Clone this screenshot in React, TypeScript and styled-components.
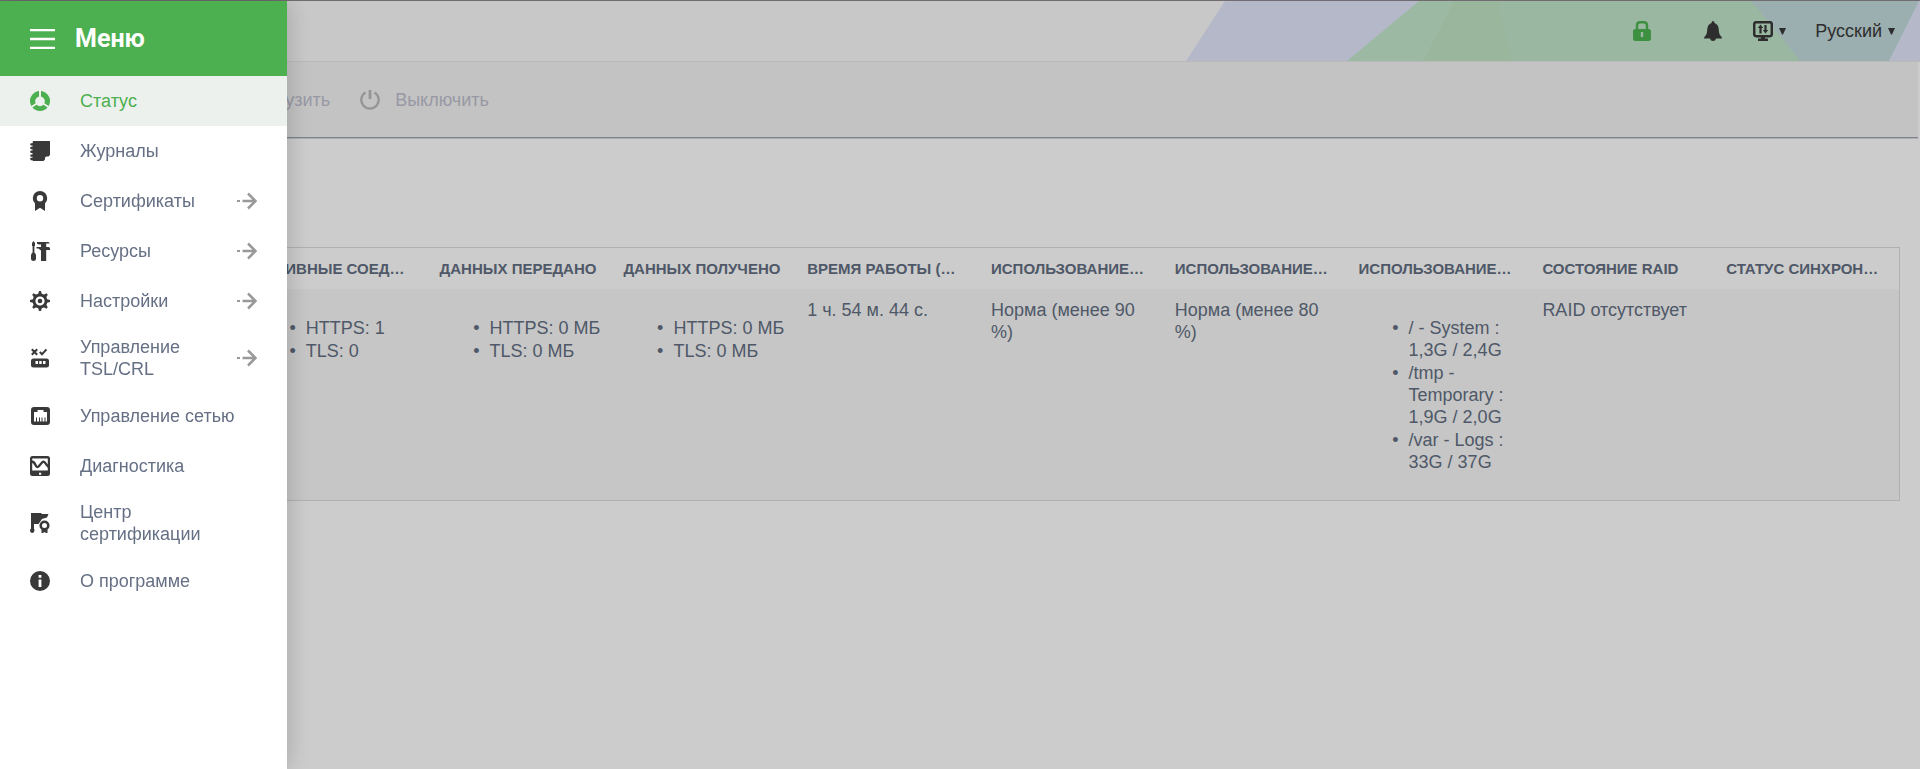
import React from 'react';
import styled, { createGlobalStyle } from 'styled-components';

const GlobalStyle = createGlobalStyle`
  *, *::before, *::after { box-sizing: border-box; }
  html, body { margin: 0; background: #fff; }
  body, button {
    font-family: "Liberation Sans", Arial, sans-serif;
    font-size: 18px;
    line-height: 22px;
  }
`;

const Page = styled.div`
  min-height: 100vh;
  border-top: 1px solid #706c70;
`;

const Header = styled.header`
  display: flex;
  justify-content: flex-end;
  height: 61px;
  background: #fafafa;
  border-bottom: 1px solid #e8e8e8;
  overflow: hidden;
`;

const Banner = styled.div`
  display: grid;
  width: 734px;
  > * { grid-area: 1 / 1; }
`;

const HeaderTools = styled.div`
  display: flex;
  align-items: center;
  justify-content: flex-end;
  padding-right: 25px;
`;

const ToolButton = styled.button<{ $gap?: number; $tone?: string }>`
  display: flex;
  align-items: center;
  gap: 6px;
  margin: 0 0 0 ${(p) => p.$gap ?? 0}px;
  padding: 0;
  border: 0;
  background: none;
  color: ${(p) => p.$tone ?? '#393939'};
  cursor: pointer;
`;

const Toolbar = styled.div`
  display: flex;
  align-items: center;
  gap: 30px;
  height: 76px;
  margin-right: 2px;
  padding-left: 173px;
  background: #f4f4f4;
  border-bottom: 1px solid #9ea3b0;
  box-shadow: 0 1px 0 #d8dae0;
`;

const Action = styled.button`
  display: flex;
  align-items: center;
  gap: 15px;
  padding: 0;
  border: 0;
  background: none;
  color: #bfbfcf;
  svg { color: #bcbcbc; }
`;

const Main = styled.main`
  padding: 109px 20px 0 60px;
`;

const StatusTable = styled.table`
  width: 100%;
  table-layout: fixed;
  border-collapse: separate;
  border-spacing: 0;
  border: 1px solid #dcdce0;
  color: #636f82;
`;

const HeadCell = styled.th`
  height: 41px;
  padding: 0 0 0 11px;
  text-align: left;
  font-size: 15px;
  white-space: nowrap;
`;

const Cell = styled.td`
  padding: 10px 10px 9px 11px;
  vertical-align: top;
  background: #f8f8f8;
`;

const List = styled.ul`
  display: grid;
  gap: 1px;
  margin: 18px 0;
  padding-left: 50px;
  list-style-type: "•\\00a0\\00a0";
`;

const Overlay = styled.div`
  position: fixed;
  inset: 1px 0 0;
  background: rgba(0, 0, 0, 0.2);
`;

const Drawer = styled.nav`
  position: fixed;
  top: 1px;
  bottom: 0;
  left: 0;
  width: 287px;
  background: #fff;
  box-shadow: 0 0 24px rgba(0, 0, 0, 0.2);
`;

const DrawerHead = styled.button`
  display: flex;
  align-items: center;
  gap: 20px;
  width: 100%;
  height: 75px;
  padding: 0 30px;
  border: 0;
  background: #4caf50;
  color: #fff;
`;

const DrawerTitle = styled.span`
  font-family: Roboto, sans-serif;
  font-size: 25px;
  font-weight: 700;
  line-height: 30px;
`;

const Menu = styled.ul`
  margin: 0;
  padding: 0;
  list-style: none;
`;

const MenuLink = styled.a<{ $active?: boolean }>`
  display: flex;
  align-items: center;
  min-height: 50px;
  padding: 10px 30px 11px;
  background: ${(p) => (p.$active ? '#ecf1ed' : 'transparent')};
  color: ${(p) => (p.$active ? '#4caf50' : '#667085')};
  text-decoration: none;
  > svg { flex: none; }
  > svg:first-child { color: ${(p) => (p.$active ? '#4caf50' : '#393939')}; }
  > svg:last-child { color: #999; }
`;

const MenuLabel = styled.span<{ $wide?: boolean }>`
  flex: 1;
  margin-left: 30px;
  margin-right: ${(p) => (p.$wide ? 0 : 20)}px;
  white-space: ${(p) => (p.$wide ? 'nowrap' : 'normal')};
`;

const Svg = ({ children, w = 20, h = 20 }: { children: React.ReactNode; w?: number; h?: number }) => (
  <svg width={w} height={h} viewBox={`0 0 ${w} ${h}`} fill="currentColor" aria-hidden="true">
    {children}
  </svg>
);

const line = { fill: 'none', stroke: 'currentColor' } as const;

const StatusIcon = () => (
  <Svg>
    <path d="M9 .1V5.500A5 5 0 0 0 5.600 12.300L1.300 15A10 10 0 0 1 9 .1ZM11 .1V5.500A5 5 0 0 1 14.400 12.300L18.700 15A10 10 0 0 0 11 .1ZM2.400 16.500L6.500 13.800A5 5 0 0 0 13.500 13.800L17.600 16.500A10 10 0 0 1 2.400 16.500Z" />
  </Svg>
);
const JournalIcon = () => (
  <Svg>
    <path d="M3 0H20V14L18.500 15.500H16.500Q15 15.500 15 17V18.500L13.500 20H3L2.500 19.200H.8Q-.4 18 .8 16.800H2.500V15.800H.8Q-.4 14.600 .8 13.400H2.500V12H.8Q-.4 10.800 .8 9.600H2.500V8.200H.8Q-.4 7 .8 5.800H2.500V4.600H.8Q-.4 3.400 .8 2.200H2.500Z" />
  </Svg>
);
const CertIcon = () => (
  <Svg>
    <circle cx="10" cy="7.200" r="5.200" {...line} strokeWidth="4" />
    <path d="M5 11.500L10 14L15 11.500V20L10 16.800L5 20Z" />
  </Svg>
);
const ToolsIcon = () => (
  <Svg>
    <path d="M3.500 0L5 2V5H4.400V11.500Q6 12.500 6 14.500V18Q5.800 20 3.500 20T1 18V14.500Q1 12.500 2.600 11.500V5H2V2ZM11 20V9.200H10.400L8.500 7.400H6.500V6H11V3.500H9L7 2.700V1H18.500L20 2.500H16.200V6H18.500L20 6.800V9H16.200V20Z" />
  </Svg>
);
const GearIcon = () => (
  <Svg>
    <circle cx="10" cy="10" r="6" {...line} strokeWidth="2.800" />
    <circle cx="10" cy="10" r="2.300" />
    {[0, 45, 90, 135, 180, 225, 270, 315].map((a) => (
      <path key={a} d="M8 4L9 0H11L12 4Z" transform={`rotate(${a} 10 10)`} />
    ))}
  </Svg>
);
const TslIcon = () => (
  <Svg>
    <path d="M1.800 1.200L7.200 6.800M7.200 1.200L1.800 6.800M9.800 4L12 6.300L16.500 1.400" {...line} strokeWidth="2" />
    <path fillRule="evenodd" d="M3.500 10.500H16.500Q19 10.500 19 13V17Q19 19.500 16.500 19.500H3.500Q1 19.500 1 17V13Q1 10.500 3.500 10.500ZM5.500 13V16H8V13ZM9.200 13V16H11.700V13ZM13 13V16H15.500V13Z" />
  </Svg>
);
const NetIcon = () => (
  <Svg>
    <path fillRule="evenodd" d="M4 1H17Q20 1 20 4V16Q20 19 17 19H4Q1 19 1 16V4Q1 1 4 1ZM7.500 4V6H4V15.500H6V11.500H7V15.500H9V11.500H10V15.500H11.500V11.500H12.500V15.500H14.500V11.500H15.500V15.500H17V6H13.500V4Z" />
  </Svg>
);
const DiagIcon = () => (
  <Svg>
    <path fillRule="evenodd" d="M2.500 0H17.500Q20 0 20 2.500V17.500Q20 20 17.500 20H2.500Q0 20 0 17.500V2.500Q0 0 2.500 0ZM2.200 2.500V14.500H17.800V2.500ZM9 16.800V18.800H11.200V16.800Z" />
    <path d="M1.500 5.500Q4 5.500 5.500 9Q7 12.500 9 10L12 6.500Q14 4.500 16 8L18.500 11" {...line} strokeWidth="2.300" />
  </Svg>
);
const CenterIcon = () => (
  <Svg>
    <path d="M1 0H11L12 1H18.500L17 4.500L12 6L8.500 11H4V16Q5 17 4 19Q2 21 .5 19Q-.7 17 1 15.500Z" />
    <circle cx="14.500" cy="12.500" r="3.800" {...line} strokeWidth="2.600" />
    <path d="M11.500 15.500L14.500 17L17.500 15.500V20H16L14.500 19L13 20H11.500Z" />
  </Svg>
);
const InfoIcon = () => (
  <Svg>
    <path fillRule="evenodd" d="M10 0A10 10 0 1 0 10 20A10 10 0 1 0 10 0ZM8.600 4V6.800H11.400V4ZM8.600 8.500V16H11.400V8.500Z" />
  </Svg>
);
const ArrowIcon = () => (
  <Svg>
    <path d="M0 9H3V11H0Z" />
    <path d="M5.500 10H18.500M11 2.500L18.500 10L11 17.500" {...line} strokeWidth="2.500" />
  </Svg>
);
const BurgerIcon = () => (
  <Svg w={25} h={20}>
    <path d="M0 1H25M0 10H25M0 19H25" stroke="currentColor" strokeWidth="2.300" />
  </Svg>
);
const PowerIcon = () => (
  <Svg>
    <path d="M5.500 2.500A8.700 8.700 0 1 0 14.500 2.500" {...line} strokeWidth="2.400" />
    <path d="M10 0V9" stroke="currentColor" strokeWidth="2.800" />
  </Svg>
);
const ReloadIcon = () => (
  <Svg>
    <path d="M17 4A9 9 0 1 0 19 10M17 0V5H12" {...line} strokeWidth="2.200" />
  </Svg>
);
const LockIcon = () => (
  <Svg w={18}>
    <path d="M4 9V4.500Q4 1.200 7 1.200H11Q14 1.200 14 4.500V9" {...line} strokeWidth="2.400" />
    <path fillRule="evenodd" d="M2.500 8H15.500Q18 8 18 10.500V17.500Q18 20 15.500 20H2.500Q0 20 0 17.500V10.500Q0 8 2.500 8ZM7.800 11V16H10.200V11Z" />
  </Svg>
);
const BellIcon = () => (
  <Svg w={18}>
    <path d="M9 0Q10.500 0 10.500 2Q14.500 3.500 14.700 8Q15 14 17 15.200Q18 16 18 17.500H12Q11.500 20 9 20T6 17.500H0Q0 16 1 15.200Q3 14 3.300 8Q3.500 3.500 7.500 2Q7.500 0 9 0Z" />
  </Svg>
);
const MonitorIcon = () => (
  <Svg>
    <rect x="1.200" y="1.200" width="17.600" height="14" rx="2" {...line} strokeWidth="2.500" />
    <path d="M8 15H12V17.500H15V20H5V17.500H8ZM7.500 3.500L10.200 7H8.600V12.500H6.400V7H4.800ZM11.400 4H13.600V9H15.200L12.500 12.500L9.800 9H11.400Z" />
  </Svg>
);
const Caret = () => (
  <Svg w={7} h={7}>
    <path d="M0 0H7L4 6.500H3Z" />
  </Svg>
);

type Item = { label: string; icon: React.FC; arrow?: boolean; active?: boolean };

const items: Item[] = [
  { label: 'Статус', icon: StatusIcon, active: true },
  { label: 'Журналы', icon: JournalIcon },
  { label: 'Сертификаты', icon: CertIcon, arrow: true },
  { label: 'Ресурсы', icon: ToolsIcon, arrow: true },
  { label: 'Настройки', icon: GearIcon, arrow: true },
  { label: 'Управление TSL/CRL', icon: TslIcon, arrow: true },
  { label: 'Управление сетью', icon: NetIcon },
  { label: 'Диагностика', icon: DiagIcon },
  { label: 'Центр сертификации', icon: CenterIcon },
  { label: 'О программе', icon: InfoIcon },
];

const columns: { title: string; value?: string | string[] }[] = [
  { title: 'ИМЯ УЗЛА' },
  { title: 'АКТИВНЫЕ СОЕД…', value: ['HTTPS: 1', 'TLS: 0'] },
  { title: 'ДАННЫХ ПЕРЕДАНО', value: ['HTTPS: 0 МБ', 'TLS: 0 МБ'] },
  { title: 'ДАННЫХ ПОЛУЧЕНО', value: ['HTTPS: 0 МБ', 'TLS: 0 МБ'] },
  { title: 'ВРЕМЯ РАБОТЫ (…', value: '1 ч. 54 м. 44 с.' },
  { title: 'ИСПОЛЬЗОВАНИЕ…', value: 'Норма (менее 90 %)' },
  { title: 'ИСПОЛЬЗОВАНИЕ…', value: 'Норма (менее 80 %)' },
  {
    title: 'ИСПОЛЬЗОВАНИЕ…',
    value: ['/ - System : 1,3G / 2,4G', '/tmp - Temporary : 1,9G / 2,0G', '/var - Logs : 33G / 37G'],
  },
  { title: 'СОСТОЯНИЕ RAID', value: 'RAID отсутствует' },
  { title: 'СТАТУС СИНХРОН…' },
];

export default function App() {
  return (
    <Page>
      <GlobalStyle />
      <Header>
        <Banner>
          <svg width="734" height="60" viewBox="0 0 734 60" aria-hidden="true">
            <path fill="#e1e7fc" d="M39 0H734V60H0Z" />
            <path fill="#c4dbdc" d="M540 0H733L703 60H540Z" />
            <path fill="#c4e9cc" d="M233 0H565L614 60H161Z" />
            <path fill="#c1e5c5" d="M268 0H565L614 60H237Z" />
            <path fill="#c1e5ca" d="M312 0H565L614 60H326Z" />
          </svg>
          <HeaderTools>
            <ToolButton $tone="#4cb550" aria-label="Безопасность"><LockIcon /></ToolButton>
            <ToolButton $gap={53} aria-label="Уведомления"><BellIcon /></ToolButton>
            <ToolButton $gap={31} aria-label="Интерфейс"><MonitorIcon /><Caret /></ToolButton>
            <ToolButton $gap={29}>Русский<Caret /></ToolButton>
          </HeaderTools>
        </Banner>
      </Header>
      <Toolbar>
        <Action><ReloadIcon />Перезагрузить</Action>
        <Action><PowerIcon />Выключить</Action>
      </Toolbar>
      <Main>
        <StatusTable>
          <thead>
            <tr>{columns.map((c, i) => <HeadCell key={i}>{c.title}</HeadCell>)}</tr>
          </thead>
          <tbody>
            <tr>
              {columns.map((c, i) => (
                <Cell key={i}>
                  {Array.isArray(c.value) ? <List>{c.value.map((v) => <li key={v}>{v}</li>)}</List> : c.value}
                </Cell>
              ))}
            </tr>
          </tbody>
        </StatusTable>
      </Main>
      <Overlay />
      <Drawer>
        <DrawerHead>
          <BurgerIcon />
          <DrawerTitle>Меню</DrawerTitle>
        </DrawerHead>
        <Menu>
          {items.map(({ label, icon: Icon, arrow, active }) => (
            <li key={label}>
              <MenuLink href="#" $active={active}>
                <Icon />
                <MenuLabel $wide={label === 'Управление сетью'}>{label}</MenuLabel>
                {arrow && <ArrowIcon />}
              </MenuLink>
            </li>
          ))}
        </Menu>
      </Drawer>
    </Page>
  );
}
